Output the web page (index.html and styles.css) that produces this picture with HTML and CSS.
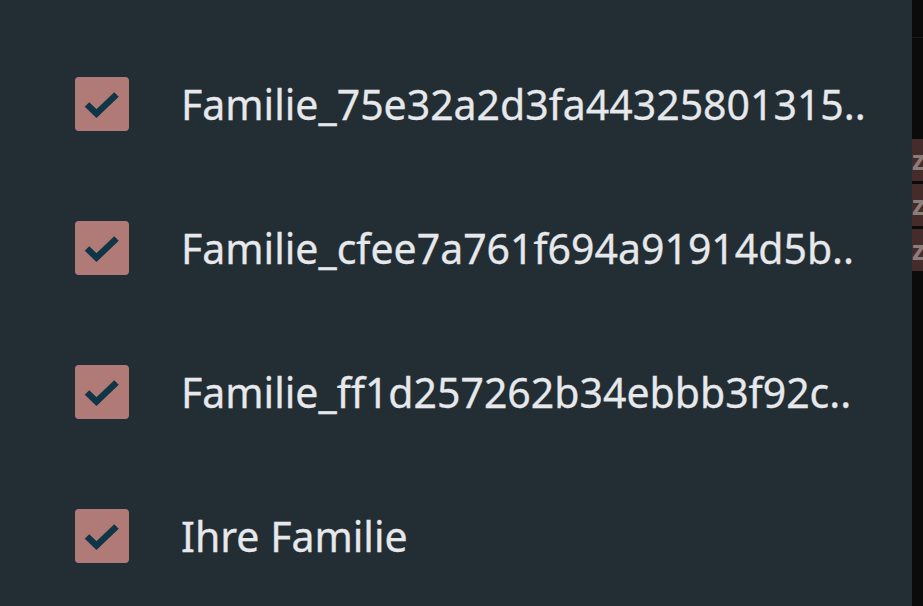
FILE: index.html
```html
<!DOCTYPE html>
<html>
<head>
<meta charset="utf-8">
<link rel="stylesheet" href="styles.css">
</head>
<body>
<div class="page">
  <div class="panel">
    <div class="row">
      <span class="box"><svg viewBox="0 0 54 54" width="54" height="54"><path d="M12 27.5 L21.5 36.5 L41.5 17.5" fill="none" stroke="#0f3547" stroke-width="6.5"/></svg></span>
      <span class="label">Familie_75e32a2d3fa44325801315..</span>
    </div>
    <div class="row">
      <span class="box"><svg viewBox="0 0 54 54" width="54" height="54"><path d="M12 27.5 L21.5 36.5 L41.5 17.5" fill="none" stroke="#0f3547" stroke-width="6.5"/></svg></span>
      <span class="label">Familie_cfee7a761f694a91914d5b..</span>
    </div>
    <div class="row">
      <span class="box"><svg viewBox="0 0 54 54" width="54" height="54"><path d="M12 27.5 L21.5 36.5 L41.5 17.5" fill="none" stroke="#0f3547" stroke-width="6.5"/></svg></span>
      <span class="label">Familie_ff1d257262b34ebbb3f92c..</span>
    </div>
    <div class="row">
      <span class="box"><svg viewBox="0 0 54 54" width="54" height="54"><path d="M12 27.5 L21.5 36.5 L41.5 17.5" fill="none" stroke="#0f3547" stroke-width="6.5"/></svg></span>
      <span class="label">Ihre Familie</span>
    </div>
  </div>
  <div class="side">
    <div class="line"></div>
    <div class="chips">
      <div class="chip">zo</div>
      <div class="chip">zo</div>
      <div class="chip">zo</div>
    </div>
  </div>
</div>
</body>
</html>
```
FILE: styles.css
```css
html, body { margin: 0; padding: 0; }
body { background: #0b0b0c; font-family: "Noto Sans", Roboto, sans-serif; }
.page { display: flex; width: 923px; height: 606px; overflow: hidden; }
.panel {
  width: 912px; flex: none; background: #232e34;
  display: flex; flex-direction: column; padding-top: 77px; gap: 90px;
  box-sizing: border-box;
}
.row { display: flex; align-items: center; height: 54px; padding-left: 75px; }
.box {
  width: 54px; height: 54px; flex: none; border-radius: 4px; background: #b07a76;
  display: block;
}
.box svg { display: block; }
.label {
  margin-left: 52px; color: #e6e8eb; font-size: 41px; white-space: nowrap;
  -webkit-text-stroke: 0.3px #e6e8eb;
}
.side { flex: 1; overflow: hidden; }
.line { height: 1px; background: #1c1d1f; margin-top: 37px; }
.chips { margin-top: 101px; display: flex; flex-direction: column; gap: 3px; }
.chip {
  height: 42px; background: #452c2a; color: #8a7d7c; font-size: 26px; font-weight: 700;
  line-height: 42px; overflow: hidden; white-space: nowrap;
}
```
